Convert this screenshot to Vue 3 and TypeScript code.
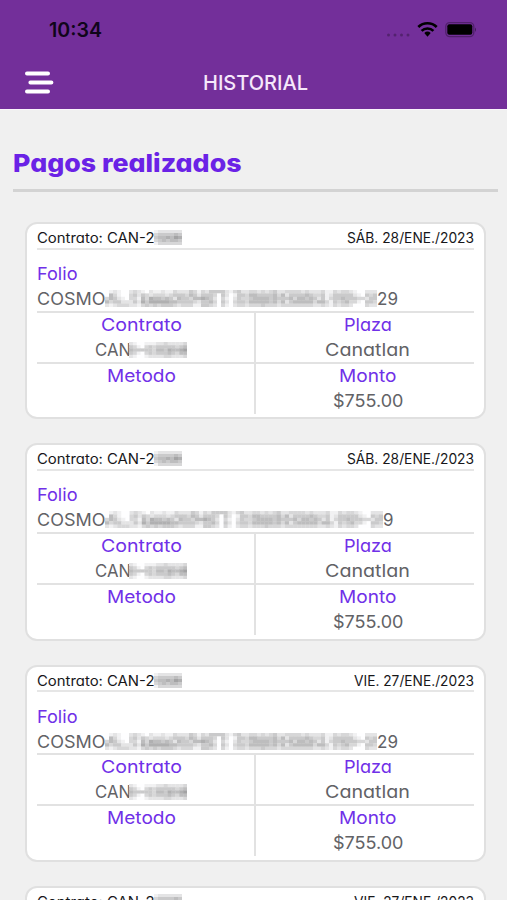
<script setup lang="ts">
import { h } from 'vue'

interface Payment {
  date: string
  dateWidth: number
  tail: string
  maskWidth: number
}

const payments: Payment[] = [
  { date: 'SÁB. 28/ENE./2023', dateWidth: 127, tail: '29', maskWidth: 272 },
  { date: 'SÁB. 28/ENE./2023', dateWidth: 127, tail: '9', maskWidth: 278 },
  { date: 'VIE. 27/ENE./2023', dateWidth: 120, tail: '29', maskWidth: 272 },
  { date: 'VIE. 27/ENE./2023', dateWidth: 120, tail: '29', maskWidth: 272 },
]

// A line of text set to a fixed measure.
const FitText = (props: { text: string; width: number }) =>
  h('svg', { width: props.width, height: 25, overflow: 'visible' }, [
    h('text', { x: 0, y: 18, textLength: props.width, lengthAdjust: 'spacingAndGlyphs', fill: 'currentColor' }, props.text),
  ])
FitText.props = ['text', 'width']

// Rows of darkness levels (0-9) for the pixelated part of each value.
const folioMask = [
  '01210023210211211322243132444421342233232342233332322231132332100222',
  '05310034243233323444354244430420144355444453524444543341244444210434',
  '35421033153655454254435565420310243345555454445355454241344544433244',
  '53442224264666665544443244530420344355555453524555553553143453310443',
  '21233322134343444323331144320310233233343332333333332232132332000322',
]
const shortMask = ['210011122322223', '431034344444345', '544444355465567', '431034344454355', '210012222332223']
const headMask = ['1222222', '3444454', '4556576', '3454554', '1333333']

const Mosaic = (props: { rows: string[]; width: number; height: number }) => {
  const cw = props.width / props.rows[0].length
  const ch = props.height / props.rows.length
  return h(
    'svg',
    { width: props.width, height: props.height, viewBox: `0 0 ${props.width} ${props.height}` },
    props.rows.flatMap((row, y) =>
      [...row].map((level, x) => {
        const v = 254 - Number(level) * 13
        return h('rect', { x: x * cw, y: y * ch, width: cw + 0.3, height: ch + 0.3, fill: `rgb(${v},${v},${v + 1})` })
      }),
    ),
  )
}
Mosaic.props = ['rows', 'width', 'height']
</script>

<template>
  <div class="screen">
    <header class="header">
      <div class="status">
        <FitText class="clock" text="10:34" :width="53" />
        <svg class="indicators" width="90" height="20" viewBox="0 0 90 20">
          <g fill="#000" opacity=".27">
            <circle cx="2.5" cy="16" r="1.5" /><circle cx="9" cy="16" r="1.5" />
            <circle cx="15.5" cy="16" r="1.5" /><circle cx="22" cy="16" r="1.5" />
          </g>
          <g fill="none" stroke="#000" stroke-width="2.6">
            <path d="M32.3 8a13 13 0 0 1 18.4 0" />
            <path d="M35.6 11.9a8.3 8.3 0 0 1 11.8 0" />
          </g>
          <path d="M38.3 14.1a4.7 4.7 0 0 1 6.4 0L41.5 17.7z" />
          <rect x="59.8" y="3.6" width="28" height="14" rx="4" fill="none" stroke="#000" stroke-opacity=".3" stroke-width="1.3" />
          <rect x="61.3" y="5.3" width="25" height="10.5" rx="2" />
          <path d="M89 8.4q2.2 2.2 0 4.5z" opacity=".4" />
        </svg>
      </div>
      <div class="bar">
        <svg class="menu" width="30" height="24" viewBox="0 0 30 24">
          <path d="M3 2.6h21M6.4 11.6h21M3 20.5h21" fill="none" stroke="#fff" stroke-width="4" stroke-linecap="round" />
        </svg>
        <h1><FitText text="HISTORIAL" :width="105" /></h1>
        <span class="spacer" />
      </div>
    </header>

    <main>
      <h2><FitText text="Pagos realizados" :width="228.5" /></h2>
      <section class="list">
        <article v-for="(payment, i) in payments" :key="i" class="card">
          <div class="top">
            <div class="run">
              <FitText text="Contrato: CAN-2" :width="117.5" />
              <Mosaic class="head-mask" :rows="headMask" :width="28" :height="15" />
            </div>
            <FitText :text="payment.date" :width="payment.dateWidth" />
          </div>
          <div class="folio">
            <FitText class="label" text="Folio" :width="40.5" />
            <div class="run">
              <FitText text="COSMO" :width="68.5" />
              <Mosaic class="folio-mask" :rows="folioMask" :width="payment.maskWidth" :height="17" />
              <FitText :text="payment.tail" :width="payment.tail.length * 10.5" />
            </div>
          </div>
          <div class="grid">
            <div class="cell">
              <FitText class="label" text="Contrato" :width="81" />
              <div class="run">
                <FitText text="CAN" :width="36" />
                <Mosaic class="short-mask" :rows="shortMask" :width="58" :height="16" />
              </div>
            </div>
            <div class="cell">
              <FitText class="label" text="Plaza" :width="48" />
              <FitText text="Canatlan" :width="85" />
            </div>
            <div class="cell">
              <FitText class="label" text="Metodo" :width="69" />
            </div>
            <div class="cell">
              <FitText class="label" text="Monto" :width="57.5" />
              <FitText text="$755.00" :width="70.5" />
            </div>
          </div>
        </article>
      </section>
    </main>
  </div>
</template>

<style>
body { background: #f0f0f0; }
</style>

<style scoped>
.screen {
  height: 900px;
  overflow: hidden;
  box-sizing: border-box;
  background: #f0f0f0;
  font-family: Inter, "Liberation Sans", sans-serif;
}
svg { display: block; flex: none; }
h1, h2 { margin: 0; font-weight: 400; }
.header { height: 109px; background: #732f9a; border-bottom: 1px solid #faf4fc; }
.status { display: flex; justify-content: space-between; height: 60px; padding: 19px 31px 0 49px; box-sizing: border-box; }
.clock { font-size: 19.5px; font-weight: 600; color: #10051a; }
.bar { display: flex; align-items: flex-start; justify-content: space-between; padding: 11px 24px 0; }
.bar h1 { padding-top: 1px; font-size: 20px; font-weight: 500; color: #f6e8fb; }
.spacer { width: 27px; }
main {
  padding: 44px 9px 0 13px;
  font-feature-settings: "cv11", "ss03";
}
h2 { height: 34.5px; border-bottom: 3px solid #d3d3d3; font-size: 25px; font-weight: 800; color: #6a22e6; }
.list { display: flex; flex-direction: column; gap: 24px; padding: 30.5px 12px 0; }
.card {
  box-sizing: border-box;
  flex: none;
  height: 197.4px;
  padding: 1px 10px 0;
  border: 2px solid #e0e0e0;
  border-radius: 12px;
  background: #fff;
  font-size: 17.5px;
  color: #626266;
}
.top { display: flex; justify-content: space-between; height: 22.5px; border-bottom: 2px solid #e6e6e6; font-size: 13.8px; color: #17171a; }
.run { display: flex; }
.label { color: #7030e8; }
.folio { height: 48.5px; padding-top: 12.5px; border-bottom: 2px solid #e2e2e2; }
.grid { display: grid; grid-template-columns: 1fr 1fr; grid-template-rows: 51px 50px; }
.cell { display: flex; flex-direction: column; align-items: center; }
.cell:nth-child(odd) { padding-right: 8px; border-right: 2px solid #e2e2e2; }
.cell:nth-child(even) { padding-left: 6px; }
.cell:nth-child(-n+2) { border-bottom: 2px solid #e2e2e2; }
.head-mask { margin: 5px 0 0 -1px; }
.folio-mask { margin: 3px 0 0 -1px; }
.short-mask { margin: 4px 0 0 -2px; }
</style>
